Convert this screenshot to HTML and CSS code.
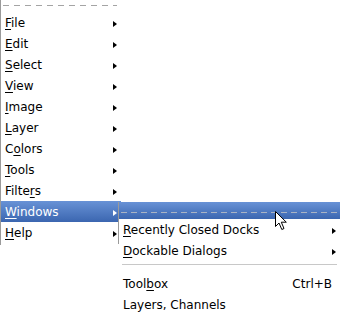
FILE: index.html
```html
<!DOCTYPE html>
<html>
<head>
<meta charset="utf-8">
<link rel="stylesheet" href="styles.css">
</head>
<body>
<div class="menu main">
  <div class="tearoff"><span class="dash"></span></div>
  <div class="item"><span><u>F</u>ile</span><span class="arrow"></span></div>
  <div class="item"><span><u>E</u>dit</span><span class="arrow"></span></div>
  <div class="item"><span><u>S</u>elect</span><span class="arrow"></span></div>
  <div class="item"><span><u>V</u>iew</span><span class="arrow"></span></div>
  <div class="item"><span><u>I</u>mage</span><span class="arrow"></span></div>
  <div class="item"><span><u>L</u>ayer</span><span class="arrow"></span></div>
  <div class="item"><span>C<u>o</u>lors</span><span class="arrow"></span></div>
  <div class="item"><span><u>T</u>ools</span><span class="arrow"></span></div>
  <div class="item"><span>Filte<u>r</u>s</span><span class="arrow"></span></div>
  <div class="item active"><span><u>W</u>indows</span><span class="arrow"></span></div>
  <div class="item"><span><u>H</u>elp</span><span class="arrow"></span></div>
</div>

<div class="menu sub">
  <div class="tearoff active"><span class="dash"></span></div>
  <div class="item"><span><u>R</u>ecently Closed Docks</span><span class="arrow"></span></div>
  <div class="item"><span><u>D</u>ockable Dialogs</span><span class="arrow"></span></div>
  <div class="separator"></div>
  <div class="item"><span>Tool<u>b</u>ox</span><span class="accel">Ctrl+B</span></div>
  <div class="item"><span>Layers, Channels</span></div>
</div>

<svg class="cursor" width="13" height="20" viewBox="0 0 13 20">
  <path d="M0.5 0.5 L0.5 15.5 L4 12 L6.8 18.5 L9 17.5 L6.3 11.2 L11.3 11.2 Z" fill="#fff" stroke="#000" stroke-width="1" stroke-linejoin="miter"/>
</svg>
</body>
</html>
```

FILE: styles.css
```css
html, body {
  margin: 0;
  padding: 0;
  background: #ffffff;
}

body {
  position: relative;
  width: 340px;
  height: 315px;
  overflow: hidden;
  font-family: "DejaVu Sans", sans-serif;
  font-size: 12px;
  color: #000;
}

.menu {
  display: flex;
  flex-direction: column;
  background: #fff;
  box-sizing: border-box;
}

.main {
  width: 121px;
  border-left: 1px solid #9a9a9a;
  padding-bottom: 2px;
}

.tearoff {
  height: 12px;
  display: flex;
  flex-direction: column;
  padding: 5px 4px 0 2px;
  box-sizing: border-box;
}

.dash {
  display: block;
  height: 1px;
  background: repeating-linear-gradient(to right, #a4a4a4 0 6px, transparent 6px 11px);
}

.item {
  height: 21px;
  box-sizing: border-box;
  padding: 2px 4px 0 4px;
  line-height: 19px;
  display: flex;
  justify-content: space-between;
  align-items: center;
  white-space: nowrap;
}

.item u {
  text-decoration: underline;
  text-decoration-thickness: 1px;
  text-underline-offset: 2px;
}

.arrow {
  width: 0;
  height: 0;
  border-left: 4px solid #000;
  border-top: 3.5px solid transparent;
  border-bottom: 3.5px solid transparent;
}

.active {
  background: linear-gradient(#6892d6, #3b66b0);
  color: #fff;
}

.active .arrow {
  border-left-color: #fff;
}

.sub {
  position: absolute;
  left: 118px;
  top: 202px;
  width: 224px;
  padding-left: 1px;
}

.sub::before {
  content: "";
  position: absolute;
  left: 0;
  top: 0;
  width: 1px;
  height: 42px;
  background: #9a9a9a;
}

.sub .tearoff {
  height: 17px;
  padding: 10px 0 0 2px;
}

.sub .tearoff .dash {
  background: repeating-linear-gradient(to right, #a9b3c4 0 6px, transparent 6px 10px);
}

.sub .item {
  padding: 2px 6px 0 4px;
}

.separator {
  height: 12px;
  box-sizing: border-box;
  padding-top: 3px;
  margin: 0 5px 0 3px;
}

.separator::after {
  content: "";
  display: block;
  height: 1px;
  background: #c8c8c8;
}

.accel {
  margin-right: 4px;
}

.cursor {
  position: absolute;
  left: 275px;
  top: 211px;
}
```
